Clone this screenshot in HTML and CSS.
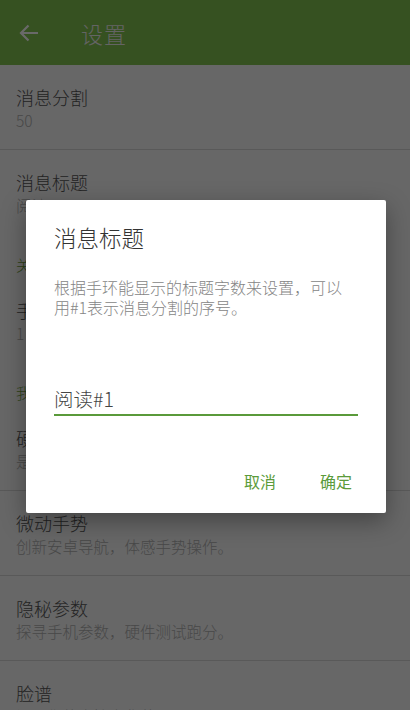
FILE: index.html
```html
<!DOCTYPE html>
<html lang="zh-CN">
<head>
    <meta charset="UTF-8">
    <meta name="viewport" content="width=device-width, initial-scale=1.0">
    <title>设置</title>
    <link rel="stylesheet" href="styles.css">
</head>
<body>
    <div class="app">
        <header class="toolbar">
            <svg class="back" width="20" height="18" viewBox="0 0 20 18">
                <path d="M19 9H2.5M9.5 1.5L2 9l7.5 7.5" fill="none" stroke="#fff" stroke-width="2.2"/>
            </svg>
            <h1>设置</h1>
        </header>

        <ul class="prefs">
            <li class="pref line">
                <p class="pref-title">消息分割</p>
                <p class="pref-sub">50</p>
            </li>
            <li class="pref">
                <p class="pref-title">消息标题</p>
                <p class="pref-sub">阅读#1</p>
            </li>
            <li class="cat">关于手环</li>
            <li class="pref">
                <p class="pref-title">手环型号</p>
                <p class="pref-sub">1</p>
            </li>
            <li class="cat">我的应用</li>
            <li class="pref line">
                <p class="pref-title">硬件信息</p>
                <p class="pref-sub">是否显示硬件信息</p>
            </li>
            <li class="pref line">
                <p class="pref-title">微动手势</p>
                <p class="pref-sub">创新安卓导航，体感手势操作。</p>
            </li>
            <li class="pref line">
                <p class="pref-title">隐秘参数</p>
                <p class="pref-sub">探寻手机参数，硬件测试跑分。</p>
            </li>
            <li class="pref">
                <p class="pref-title">脸谱</p>
                <p class="pref-sub">记录你的表情变化范围。</p>
            </li>
        </ul>

        <div class="scrim"></div>

        <div class="dialog">
            <h2>消息标题</h2>
            <p class="msg">根据手环能显示的标题字数来设置，可以用#1表示消息分割的序号。</p>
            <div class="field">阅读#1</div>
            <div class="actions">
                <button>取消</button>
                <button>确定</button>
            </div>
        </div>
    </div>
</body>
</html>
```

FILE: styles.css
```css
/* 설정 화면 + 다이얼로그 */
* {margin: 0; padding: 0; box-sizing: border-box;}
body {font-family: "Noto Sans CJK SC", "Noto Sans", Roboto, sans-serif; font-weight: 300; background: #fafafa; width: 410px; height: 710px; overflow: hidden;}
.app {position: relative; width: 410px; height: 710px; overflow: hidden;}

.toolbar {height: 65px; background: #84c450; display: flex; align-items: center; padding-left: 19px;}
.toolbar .back {display: block;}
.toolbar h1 {font-size: 22px; font-weight: 300; color: #f2f2f2; margin-left: 42px; letter-spacing: 1px;}

.prefs {list-style: none;}
.pref {padding: 20px 16px 18px; height: 84px;}
.pref.line {border-bottom: 1px solid #d8d8d8; height: 85px;}
.pref-title {font-size: 18px; line-height: 24px; color: #555;}
.pref-sub {font-size: 15.5px; line-height: 22px; color: #b0b0b0;}
.cat {padding: 21px 16px 3px; font-size: 15px; line-height: 20px; color: #6a9f3a; height: 44px;}

.scrim {position: absolute; inset: 0; background: rgba(0, 0, 0, 0.59);}

.dialog {position: absolute; top: 200px; left: 26px; width: 360px; height: 313px; background: #fff; border-radius: 2px; box-shadow: 0 8px 24px rgba(0, 0, 0, 0.35); padding: 23px 28px 0 28px;}
.dialog h2 {font-size: 22.5px; font-weight: 300; line-height: 28px; color: #333;}
.dialog .msg {margin-top: 26px; margin-right: 4px; font-size: 16px; line-height: 20px; color: #858585;}
.dialog .field {margin-top: 69px; font-size: 19.5px; line-height: 26px; color: #444; padding-bottom: 2px; border-bottom: 2px solid #5a9a3a;}
.dialog .actions {display: flex; justify-content: flex-end; gap: 28px; margin-top: 47px; margin-right: -2px;}
.dialog button {border: 0; background: none; font-family: inherit; font-weight: 400; font-size: 16px; line-height: 36px; padding: 0 8px; color: #5b9b3b;}
```
